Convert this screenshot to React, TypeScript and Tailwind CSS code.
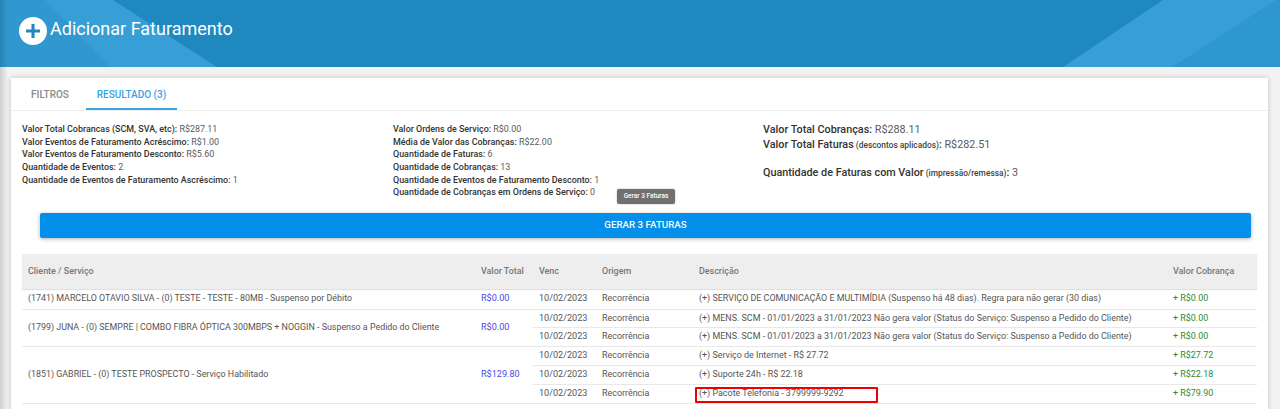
import React from "react";

const L = ({ k, v }: { k: string; v: string }) => (
  <div className="h-[12.7px] whitespace-nowrap leading-[12.7px]">
    <span className="font-medium text-[#333]">{k}:</span> <span className="text-[#5a5a5a]">{v}</span>
  </div>
);

const Big = ({ k, note, v }: { k: string; note?: string; v: string }) => (
  <div className="h-[15px] whitespace-nowrap leading-[15px]">
    <span className="font-medium text-[#333]">{k}</span>
    {note && <span className="text-[8.4px] font-medium text-[#444]"> ({note})</span>}
    <span className="font-medium text-[#333]">:</span> <span className="text-[#5a5a5a]">{v}</span>
  </div>
);

type Sub = { x: string; v: string; h: string };
const groups: { c: string; t: string; subs: Sub[] }[] = [
  {
    c: "(1741) MARCELO OTAVIO SILVA - (0) TESTE - TESTE - 80MB - Suspenso por Débito",
    t: "R$0.00",
    subs: [{ h: "h-[20px]", x: "(+) SERVIÇO DE COMUNICAÇÃO E MULTIMÍDIA (Suspenso há 48 dias). Regra para não gerar (30 dias)", v: "+ R$0.00" }],
  },
  {
    c: "(1799) JUNA - (0) SEMPRE | COMBO FIBRA ÓPTICA 300MBPS + NOGGIN - Suspenso a Pedido do Cliente",
    t: "R$0.00",
    subs: [
      { h: "h-[18px]", x: "(+) MENS. SCM - 01/01/2023 a 31/01/2023 Não gera valor (Status do Serviço: Suspenso a Pedido do Cliente)", v: "+ R$0.00" },
      { h: "h-[18px]", x: "(+) MENS. SCM - 01/01/2023 a 31/01/2023 Não gera valor (Status do Serviço: Suspenso a Pedido do Cliente)", v: "+ R$0.00" },
    ],
  },
  {
    c: "(1851) GABRIEL - (0) TESTE PROSPECTO - Serviço Habilitado",
    t: "R$129.80",
    subs: [
      { h: "h-[19px]", x: "(+) Serviço de Internet - R$ 27.72", v: "+ R$27.72" },
      { h: "h-[19px]", x: "(+) Suporte 24h - R$ 22.18", v: "+ R$22.18" },
      { h: "h-[18px]", x: "(+) Pacote Telefonia - 3799999-9292", v: "+ R$79.90" },
    ],
  },
  {
    c: "",
    t: "",
    subs: [{ h: "h-[18px] pt-[3px]", x: "(+)", v: "+ R$0.00" }],
  },
];

export default function App() {
  return (
    <div className="relative h-[409px] overflow-hidden bg-[#f2f2f2] font-['Roboto',sans-serif] text-[#444]">
      <header className="relative h-[67px] overflow-hidden bg-[#1f88be]">
        <svg className="absolute left-0 top-0 h-[67px] w-[220px]" viewBox="0 0 220 67" aria-hidden="true">
          <polygon points="0,0 113,0 217,67 0,67" fill="#379fd5" />
          <polygon points="0,0 45,0 110,67 0,67" fill="#3098cf" />
        </svg>
        <svg className="absolute right-0 top-0 h-[67px] w-[280px]" viewBox="0 0 280 67" aria-hidden="true">
          <polygon points="63,67 163,0 277,0 173,67" fill="#379fd5" />
          <polygon points="173,67 277,0 280,0 280,67" fill="#2f97cf" />
        </svg>
        <div className="relative flex h-full items-start pl-[19px] pt-[17px]">
          <div className="flex h-[28px] w-[28px] items-center justify-center rounded-full bg-white">
            <svg width="16" height="16" viewBox="0 0 16 16" aria-hidden="true">
              <path d="M8 1v14M1 8h14" stroke="#1f88be" strokeWidth="3" />
            </svg>
          </div>
          <h1 className="ml-[3px] text-[18px] leading-[24px] text-white">Adicionar Faturamento</h1>
        </div>
      </header>

      <main className="ml-[11px] mr-[12px] mt-[11px] h-[400px] bg-white shadow-[0_0_5px_rgba(0,0,0,0.2)]">
        <nav className="flex h-[33px] border-b border-[#eee] pl-[9px] text-[10px] font-medium">
          <div className="flex w-[60px] items-center justify-center pt-[1px] text-[#8a8a8a]">FILTROS</div>
          <div className="ml-[6px] flex w-[91px] items-center justify-center border-b-2 border-[#3aa3e3] pt-[3px] text-[#3aa3e3]">RESULTADO (3)</div>
        </nav>

        <section className="relative flex h-[102px] pl-[11px] pt-[12px] text-[8.93px]">
          <div className="w-[371px]">
            <L k="Valor Total Cobrancas (SCM, SVA, etc)" v="R$287.11" />
            <L k="Valor Eventos de Faturamento Acréscimo" v="R$1.00" />
            <L k="Valor Eventos de Faturamento Desconto" v="R$5.60" />
            <L k="Quantidade de Eventos" v="2" />
            <L k="Quantidade de Eventos de Faturamento Ascréscimo" v="1" />
          </div>
          <div className="w-[370px]">
            <L k="Valor Ordens de Serviço" v="R$0.00" />
            <L k="Média de Valor das Cobranças" v="R$22.00" />
            <L k="Quantidade de Faturas" v="6" />
            <L k="Quantidade de Cobranças" v="13" />
            <L k="Quantidade de Eventos de Faturamento Desconto" v="1" />
            <L k="Quantidade de Cobranças em Ordens de Serviço" v="0" />
          </div>
          <div className="-mt-[1px] text-[10.8px]">
            <Big k="Valor Total Cobranças" v="R$288.11" />
            <Big k="Valor Total Faturas" note="descontos aplicados" v="R$282.51" />
            <div className="mt-[13px]">
              <Big k="Quantidade de Faturas com Valor" note="impressão/remessa" v="3" />
            </div>
          </div>
          <div className="absolute left-[606px] top-[78px] flex h-[15px] w-[58px] items-center justify-center rounded-[2px] bg-[#707070] text-[6.5px] font-medium text-white shadow-[0_0_2px_rgba(0,0,0,0.3)]">
            Gerar 3 Faturas
          </div>
        </section>

        <div className="ml-[29px] mr-[17px] flex h-[25px] items-center justify-center rounded-[2px] bg-[#038fea] text-[9.75px] font-medium text-[#f4f9fd] shadow-[0_1px_4px_rgba(0,0,0,0.3)]">
          GERAR 3 FATURAS
        </div>

        <div className="mx-[11px] mt-[16px] text-[8.93px]">
          <div className="flex h-[35px] items-center bg-[#eeeeee] font-medium text-[#777] shadow-[0_1px_1px_rgba(0,0,0,0.12)]">
            <div className="w-[459px] pl-[6px]">Cliente / Serviço</div>
            <div className="w-[52px]">Valor Total</div>
            <div className="w-[63px] pl-[6px]">Venc</div>
            <div className="w-[97px] pl-[6px]">Origem</div>
            <div className="w-[474px] pl-[6px]">Descrição</div>
            <div className="pl-[6px]">Valor Cobrança</div>
          </div>
          {groups.map((g, gi) => (
            <div key={gi} className="flex border-b border-[#e8e8e8] text-[#555]">
              <div className="flex w-[459px] items-center whitespace-nowrap pl-[6px] text-[8.9px]">{g.c}</div>
              <div className="flex w-[52px] items-center text-[9.1px] text-[#4a4ae8]">{g.t}</div>
              <div className="flex-1">
                {g.subs.map((s, i) => (
                  <div key={i} className={`flex items-center ${i < g.subs.length - 1 ? "border-b border-[#e8e8e8]" : ""} ${s.h}`}>
                    <div className="w-[63px] pl-[6px] text-[9.1px]">10/02/2023</div>
                    <div className="w-[97px] pl-[6px]">Recorrência</div>
                    <div className="relative w-[474px] whitespace-nowrap pl-[6px]">
                      {s.x}
                      {s.x.includes("Telefonia") && (
                        <div className="absolute left-[2px] top-[0px] h-[16px] w-[183px] rounded-[1px] border-[2px] border-[#ee0000]" />
                      )}
                    </div>
                    <div className="pl-[6px] text-[#2e8b2e]">{s.v}</div>
                  </div>
                ))}
              </div>
            </div>
          ))}
        </div>
      </main>

      <div className="pointer-events-none absolute inset-y-0 left-0 w-[8px] bg-gradient-to-r from-black/15 to-transparent" />
    </div>
  );
}
